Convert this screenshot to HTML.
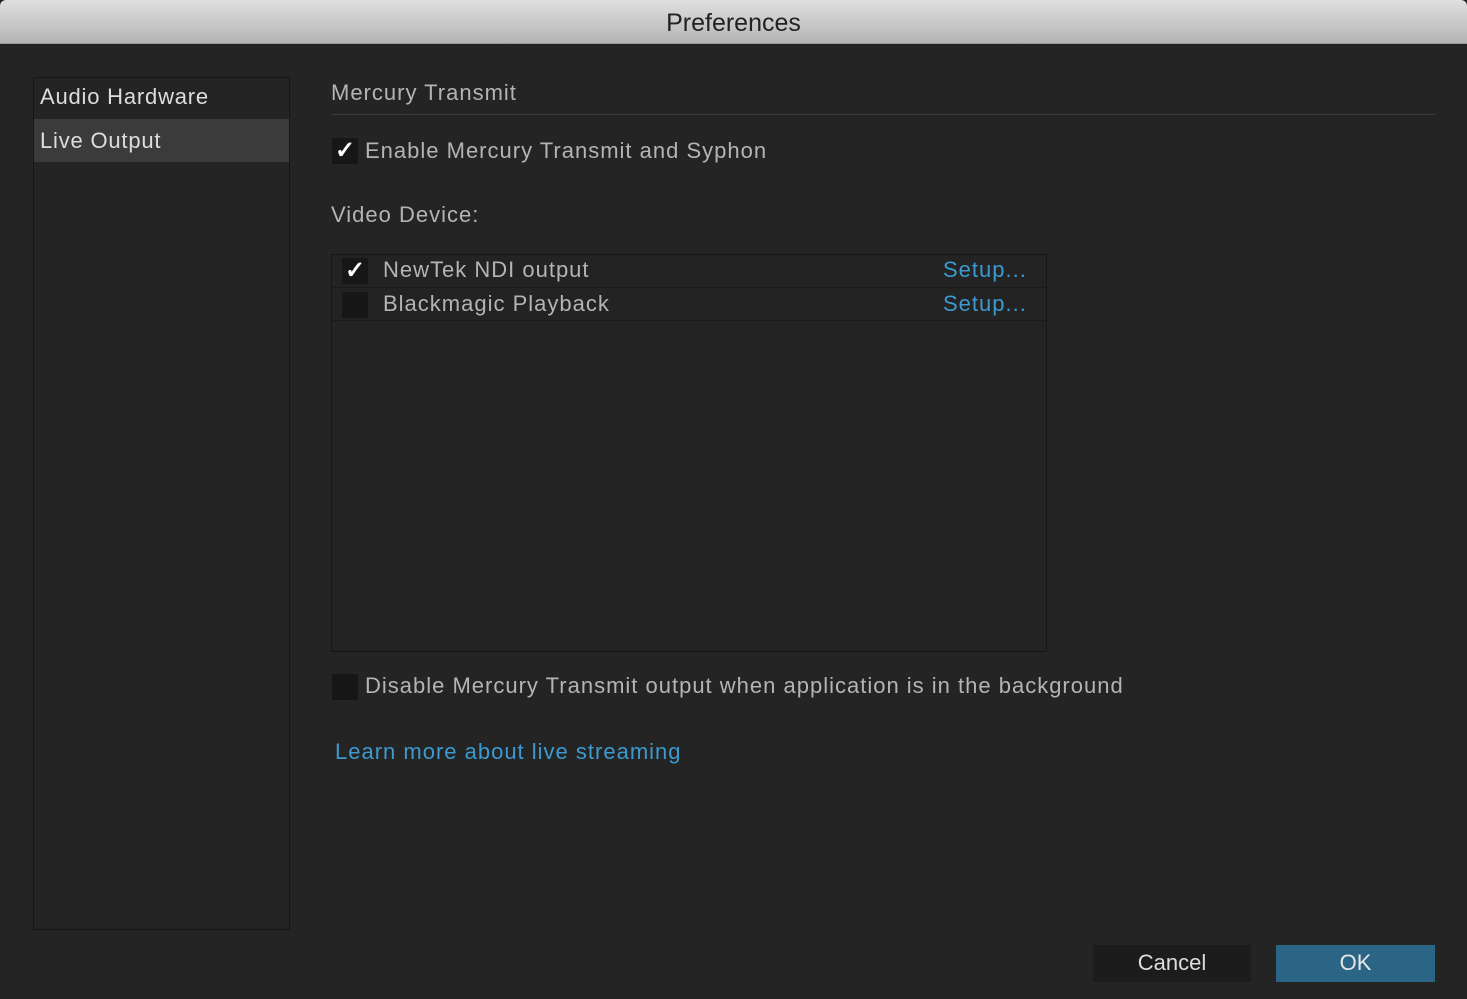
<!DOCTYPE html>
<html><head><style>
body{margin:0;width:1467px;height:999px;background:#242424;font-family:"Liberation Sans",sans-serif;position:relative;overflow:hidden;color:#b4b4b4}
.a{position:absolute;white-space:nowrap}
.title{left:0;top:0;width:1467px;height:43px;background:linear-gradient(#e0e0e0,#b4b4b4);border-bottom:1px solid #999;text-align:center;line-height:46px;font-size:25px;color:#222;border-radius:6px 6px 0 0}
.cb{position:absolute;width:26px;height:26px;background:#171717;color:#fff;font-size:24px;font-weight:bold;line-height:26px;text-align:center}
.t{font-size:22px;letter-spacing:1.0px}
.blue{color:#3c9ad0}
</style></head><body>
<div class="a title">Preferences</div>
<div class="a" style="left:33px;top:77px;width:255px;height:851px;border:1px solid #161616"></div>
<div class="a" style="left:34px;top:119px;width:255px;height:43px;background:#3b3b3b"></div>
<div class="a t" style="left:40px;top:84px;color:#ddd;letter-spacing:0.8px">Audio Hardware</div>
<div class="a t" style="left:40px;top:128px;color:#ddd;letter-spacing:0.8px">Live Output</div>
<div class="a t" style="left:331px;top:80px">Mercury Transmit</div>
<div class="a" style="left:331px;top:114px;width:1104px;height:1px;background:#3a3a3a"></div>
<div class="cb" style="left:332px;top:138px">✓</div>
<div class="a t" style="left:365px;top:138px">Enable Mercury Transmit and Syphon</div>
<div class="a t" style="left:331px;top:202px">Video Device:</div>
<div class="a" style="left:331px;top:254px;width:714px;height:396px;border:1px solid #161616;background:#232323"></div>
<div class="a" style="left:332px;top:287px;width:714px;height:1px;background:#1a1a1a"></div>
<div class="a" style="left:332px;top:320px;width:714px;height:1px;background:#1a1a1a"></div>
<div class="cb" style="left:342px;top:258px">✓</div>
<div class="cb" style="left:342px;top:292px"></div>
<div class="a t" style="left:383px;top:257px">NewTek NDI output</div>
<div class="a t" style="left:383px;top:291px">Blackmagic Playback</div>
<div class="a t blue" style="left:943px;top:257px">Setup...</div>
<div class="a t blue" style="left:943px;top:291px">Setup...</div>
<div class="cb" style="left:332px;top:674px"></div>
<div class="a t" style="left:365px;top:673px">Disable Mercury Transmit output when application is in the background</div>
<div class="a t blue" style="left:335px;top:739px">Learn more about live streaming</div>
<div class="a" style="left:1093px;top:945px;width:158px;height:37px;background:#1c1c1c;color:#ddd;font-size:22px;text-align:center;line-height:36px">Cancel</div>
<div class="a" style="left:1276px;top:945px;width:159px;height:37px;background:#2b6585;color:#e6e6e6;font-size:22px;text-align:center;line-height:36px">OK</div>
</body></html>
